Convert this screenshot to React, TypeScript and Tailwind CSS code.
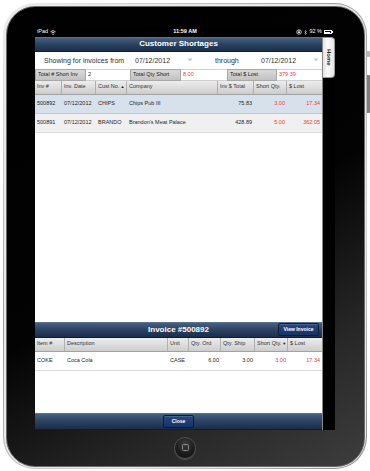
import React from "react";

const FONT = "font-['Liberation_Sans',Arial,sans-serif]";

function Arrow() {
  return (
    <svg width="6" height="4" viewBox="0 0 6 4">
      <path d="M0.5 0.5 L5.5 0.5 L3 3.5 Z" fill="#c8c8c8" />
    </svg>
  );
}

const mainCols = [
  { w: "w-[27px]", label: "Inv #", right: false },
  { w: "w-[34px]", label: "Inv. Date", right: false },
  { w: "w-[31px]", label: "Cust No.", right: false, sort: "▲" },
  { w: "w-[91px]", label: "Company", right: false },
  { w: "w-[36px]", label: "Inv $ Total", right: true },
  { w: "w-[33px]", label: "Short Qty.", right: true, red: true },
  { w: "w-[35px]", label: "$ Lost", right: true, red: true },
];

const mainRows = [
  { sel: true, cells: ["500892", "07/12/2012", "CHIPS", "Chips Pub III", "75.83", "3.00", "17.34"] },
  { sel: false, cells: ["500891", "07/12/2012", "BRANDO", "Brandon's Meat Palace", "428.89", "5.00", "362.05"] },
];

const detCols = [
  { w: "w-[30px]", label: "Item #", right: false },
  { w: "w-[103px]", label: "Description", right: false },
  { w: "w-[21px]", label: "Unit", right: false },
  { w: "w-[32px]", label: "Qty. Ord", right: true },
  { w: "w-[34px]", label: "Qty. Ship", right: true },
  { w: "w-[33px]", label: "Short Qty.", right: true, red: true, sort: "▼" },
  { w: "w-[34px]", label: "$ Lost", right: true, red: true },
];

const detRow = ["COKE", "Coca Cola", "CASE", "6.00", "3.00", "3.00", "17.34"];

type Col = { w: string; label: string; right: boolean; red?: boolean; sort?: string };

function HeaderRow({ cols }: { cols: Col[] }) {
  return (
    <div className="flex h-[14px] shrink-0 bg-[linear-gradient(#ededed,#cdcdcd)] border-b border-[#a2a2a2]">
      {cols.map((c, i) => (
        <div
          key={i}
          className={`${c.w} h-full flex items-center pl-[2px] text-[5.5px] leading-none text-[#333] whitespace-nowrap overflow-hidden ${
            i < cols.length - 1 ? "border-r border-[#b0b0b0]" : ""
          }`}
        >
          {c.label}
          {c.sort ? <span className="ml-[1px] text-[4px] text-[#111]">{c.sort}</span> : null}
        </div>
      ))}
    </div>
  );
}

function DataRow({ cols, cells, bg }: { cols: Col[]; cells: string[]; bg: string }) {
  return (
    <div className={`flex h-[18px] shrink-0 ${bg}`}>
      {cols.map((c, i) => (
        <div
          key={i}
          className={`${c.w} h-full flex items-center text-[5.5px] leading-none whitespace-nowrap overflow-hidden ${
            c.right ? "justify-end pr-[2px]" : "pl-[2px]"
          } ${c.red ? "text-[#ef3a3a]" : "text-[#262626]"}`}
        >
          {cells[i]}
        </div>
      ))}
    </div>
  );
}

function StatusBar() {
  return (
    <div className="h-[9px] shrink-0 grid grid-cols-3 items-center px-[2px] text-white text-[5.5px] leading-none">
      <div className="flex items-center gap-[2px]">
        <span>iPad</span>
        <svg width="6" height="5" viewBox="0 0 12 10">
          <path d="M1 3.5 A7.5 7.5 0 0 1 11 3.5" stroke="#fff" strokeWidth="1.6" fill="none" />
          <path d="M3 5.8 A4.5 4.5 0 0 1 9 5.8" stroke="#fff" strokeWidth="1.6" fill="none" />
          <circle cx="6" cy="8.3" r="1.3" fill="#fff" />
        </svg>
      </div>
      <div className="text-center font-bold">11:59 AM</div>
      <div className="flex items-center justify-end gap-[2px]">
        <svg width="6" height="6" viewBox="0 0 12 12">
          <circle cx="6" cy="6" r="4.5" stroke="#fff" strokeWidth="1.4" fill="none" />
          <rect x="4.3" y="5" width="3.4" height="3" fill="#fff" />
          <path d="M4.8 5 V3.8 A1.2 1.2 0 0 1 7.2 3.8 V5" stroke="#fff" strokeWidth="0.8" fill="none" />
        </svg>
        <svg width="3" height="5" viewBox="0 0 6 10">
          <path d="M1 3 L5 7 L3 9 V1 L5 3 L1 7" stroke="#fff" strokeWidth="0.9" fill="none" />
        </svg>
        <span>92 %</span>
        <div className="flex items-center">
          <div className="w-[8px] h-[4px] border border-white p-[0.5px]">
            <div className="w-[90%] h-full bg-white" />
          </div>
          <div className="w-[1px] h-[2px] bg-white" />
        </div>
      </div>
    </div>
  );
}

function DarkBar({ children, h }: { children: React.ReactNode; h: string }) {
  return (
    <div
      className={`${h} shrink-0 bg-[linear-gradient(#46607f,#2a4262_50%,#1b2d47)] border-t border-[#5b7290] border-b border-b-[#101c2e]`}
    >
      {children}
    </div>
  );
}

function BlueButton({ label, w }: { label: string; w: string }) {
  return (
    <div
      className={`${w} h-[13px] rounded-[2px] border border-[#0b1c38] bg-[linear-gradient(#27487c,#15336a)] flex items-center justify-center text-white text-[5px] font-bold leading-none shadow-[inset_0_1px_0_rgba(255,255,255,0.15)]`}
    >
      {label}
    </div>
  );
}

export default function App() {
  return (
    <div className={`w-[370px] h-[471px] bg-white flex pt-[3px] pl-[3px] overflow-hidden ${FONT}`}>
      {/* Frame */}
      <div className="w-[364px] h-[466px] shrink-0 rounded-[32px] p-[1px] bg-[linear-gradient(135deg,#f2f2f2,#9c9c9c_40%,#d8d8d8_70%,#8a8a8a)]">
        <div className="w-full h-full rounded-[31px] p-[1.5px] bg-[#e9e9e9]">
          <div className="w-full h-full rounded-[29px] border border-[#6a6a6a] bg-[linear-gradient(150deg,#000_0%,#030303_52%,#262626_78%,#3d3d3d_100%)] flex flex-col items-center pt-[21px]">
            {/* Screen */}
            <div className="w-[300px] h-[402px] shrink-0 bg-black flex flex-col">
              <StatusBar />
              <div className="flex flex-1">
                {/* Modal */}
                <div className="w-[287px] h-full bg-white flex flex-col">
                  {/* top section */}
                  <div className="h-[285px] shrink-0 flex flex-col">
                    <DarkBar h="h-[15px]">
                      <div className="h-full flex items-center justify-center text-white text-[8px] font-bold leading-none">
                        Customer Shortages
                      </div>
                    </DarkBar>
                    <div className="h-[17px] shrink-0 flex items-center pl-[9px] text-[7px] leading-none text-[#2e2e2e]">
                      <span className="w-[91px]">Showing for invoices from</span>
                      <span className="w-[52px]">07/12/2012</span>
                      <span className="w-[28px] flex">
                        <Arrow />
                      </span>
                      <span className="w-[46px]">through</span>
                      <span className="w-[52px]">07/12/2012</span>
                      <Arrow />
                    </div>
                    <div className="h-[12px] shrink-0 flex text-[5.5px] leading-none">
                      <div className="w-[51px] flex items-center pl-[2px] bg-[linear-gradient(#dadada,#c2c2c2)] border border-[#a8a8a8] text-[#222]">
                        Total # Short Inv
                      </div>
                      <div className="w-[44px] flex items-center pl-[2px] bg-white border-y border-[#cfcfcf] text-[#222]">
                        2
                      </div>
                      <div className="w-[51px] flex items-center pl-[2px] bg-[linear-gradient(#dadada,#c2c2c2)] border border-[#a8a8a8] text-[#222]">
                        Total Qty Short
                      </div>
                      <div className="w-[46px] flex items-center pl-[2px] bg-white border-y border-[#cfcfcf] text-[#ef3a3a]">
                        8.00
                      </div>
                      <div className="w-[50px] flex items-center pl-[2px] bg-[linear-gradient(#dadada,#c2c2c2)] border border-[#a8a8a8] text-[#222]">
                        Total $ Lost
                      </div>
                      <div className="w-[45px] flex items-center pl-[2px] bg-white border-y border-[#cfcfcf] text-[#ef3a3a]">
                        379.39
                      </div>
                    </div>
                    <HeaderRow cols={mainCols} />
                    {mainRows.map((r, i) => (
                      <div key={i} className={r.sel ? "border-b border-[#bfcad6]" : "border-b border-[#dcdcdc]"}>
                        <DataRow cols={mainCols} cells={r.cells} bg={r.sel ? "bg-[#d7e1ec]" : "bg-[#f0f0f0]"} />
                      </div>
                    ))}
                    <div className="flex-1" />
                  </div>
                  {/* detail section */}
                  <DarkBar h="h-[16px]">
                    <div className="h-full grid grid-cols-[1fr_auto_1fr] items-center">
                      <div />
                      <div className="text-white text-[8px] font-bold leading-none">Invoice #500892</div>
                      <div className="flex justify-end pr-[3px]">
                        <BlueButton label="View Invoice" w="w-[41px]" />
                      </div>
                    </div>
                  </DarkBar>
                  <HeaderRow cols={detCols} />
                  <div className="border-b border-[#dcdcdc]">
                    <DataRow cols={detCols} cells={detRow} bg="bg-white" />
                  </div>
                  <div className="flex-1" />
                  <DarkBar h="h-[17px]">
                    <div className="h-full flex items-center justify-center">
                      <BlueButton label="Close" w="w-[31px]" />
                    </div>
                  </DarkBar>
                </div>
                <div className="w-[1px] h-full bg-[#8a8a8a]" />
                {/* Home tab */}
                <div className="w-[12px] h-[41px] rounded-r-[4px] bg-[linear-gradient(90deg,#e2e2e2,#fbfbfb_40%,#e6e6e6)] border border-l-0 border-[#9a9a9a] flex items-center justify-center">
                  <span className="[writing-mode:vertical-rl] text-[6px] font-bold leading-none text-[#222]">Home</span>
                </div>
              </div>
            </div>
            {/* Home button */}
            <div className="mt-[7px] w-[22px] h-[22px] rounded-full border border-[#505050] bg-[radial-gradient(circle_at_50%_30%,#3c3c3c,#151515_70%)] flex items-center justify-center shadow-[0_1px_0_rgba(255,255,255,0.15)]">
              <div className="w-[7px] h-[7px] rounded-[1.5px] border border-[#8c8c8c]" />
            </div>
          </div>
        </div>
      </div>
      {/* side buttons */}
      <div className="flex flex-col pt-[48px] gap-[18px]">
        <div className="w-[3px] h-[6px] bg-[#b8b8b8] rounded-r-[1px]" />
        <div className="w-[3px] h-[38px] bg-[#7d7d7d] rounded-r-[1px]" />
      </div>
    </div>
  );
}
